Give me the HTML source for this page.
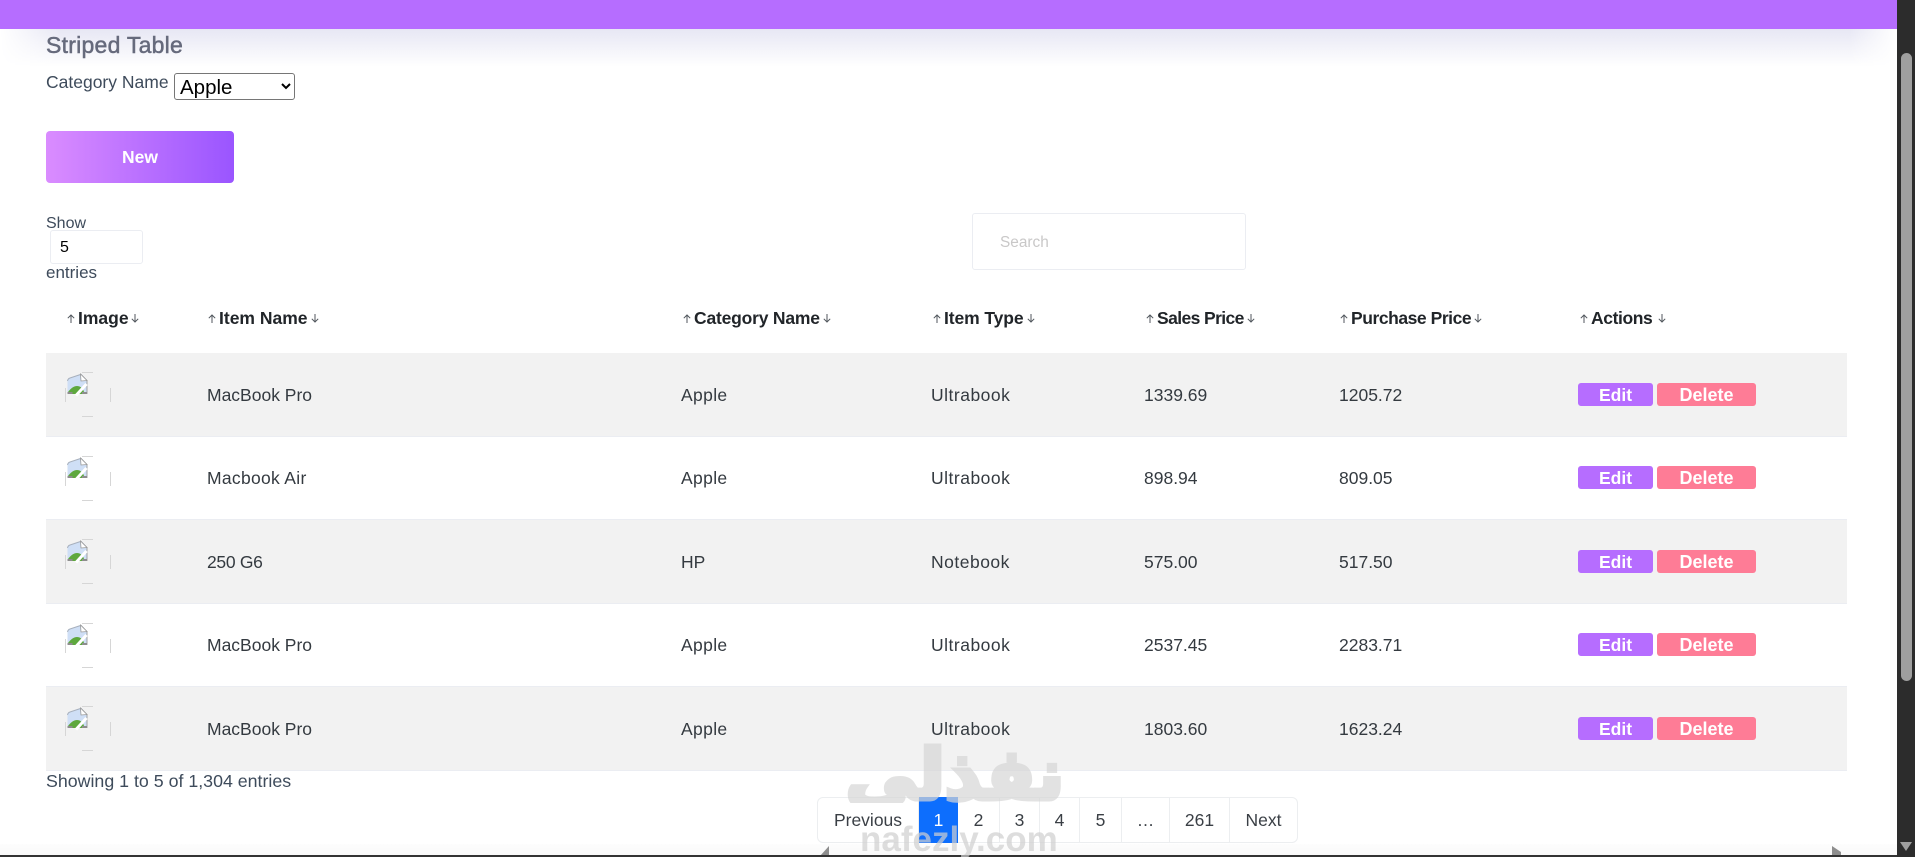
<!DOCTYPE html>
<html lang="en">
<head>
<meta charset="utf-8">
<title>Striped Table</title>
<style>
*{box-sizing:border-box}
html,body{margin:0;padding:0;width:1915px;height:857px;overflow:hidden;background:#fff}
body{position:relative;font-family:"Liberation Sans",sans-serif;font-size:17.5px;color:#343a40}
.abs{position:absolute}
#nav{left:0;top:0;width:1897px;height:29px;background:#b66dff;z-index:3}
#shade{left:0;top:29px;width:1897px;height:38px;background:linear-gradient(#e7e7f4,#fff);-webkit-mask-image:linear-gradient(90deg,transparent 0,#000 60px,#000 1850px,transparent 1897px)}
#title{left:46px;top:31px;margin:0;font-size:23px;line-height:28px;font-weight:400;letter-spacing:.25px;color:#666a7c;-webkit-text-stroke:.5px #666a7c}
#catl{left:46px;top:72px;line-height:20px;font-size:17.5px;color:#3e4b5b}
#cat{left:174px;top:73px;width:121px;height:27px;font:20.5px "Liberation Sans",sans-serif;color:#000;background:#fff;border:1px solid #767676;border-radius:3px;padding:1px 0 0 1px}
#new{left:46px;top:131px;width:188px;height:52px;border:0;border-radius:4px;background:linear-gradient(90deg,#da8cff,#9a55ff);color:#fff;font:bold 17.5px "Liberation Sans",sans-serif;padding:0}
#show{left:46px;top:214px;line-height:20px;font-size:16px;color:#3e4b5b}
#num{left:50px;top:230px;width:93px;height:34px;border:1px solid #ebedf2;border-radius:3px;font:16px "Liberation Sans",sans-serif;color:#000;padding:1px 0 0 9px;background:#fff}
#ent{left:46px;top:263px;line-height:20px;font-size:17px;color:#3e4b5b}
#search{left:972px;top:213px;width:274px;height:57px;border:1px solid #ebedf2;border-radius:3px;font:15.4px "Liberation Sans",sans-serif;padding:2px 0 0 27px;background:#fff}
#search::placeholder{color:#c9c8c8;opacity:1}
table{position:absolute;left:46px;top:285px;width:1801px;border-collapse:separate;border-spacing:0;table-layout:fixed}
th{height:68px;padding:0;text-align:left;font-size:17.5px;font-weight:700;color:#212529;vertical-align:middle}
th div{display:flex;align-items:center;gap:3px;position:relative;top:-1px;white-space:nowrap}
th svg{width:8px;height:9px;flex:none}
td{padding:1px 0 0;vertical-align:middle;color:#343a40;border-bottom:1px solid #ebedf2;position:relative}
td.n{padding-left:1px}
tbody tr:nth-child(odd){background:#f2f2f2}
tr.a{height:84px}tr.b{height:83px}
.ph{position:absolute;left:19px;top:19px;width:46px;height:46px}
.u{letter-spacing:.5px}.p{letter-spacing:.35px}
.btn{display:inline-block;position:relative;top:-1px;height:23px;line-height:24px;border-radius:3px;color:#fff;font-weight:700;text-align:center;vertical-align:middle;border:0;padding:0;font-family:"Liberation Sans",sans-serif}
.e{width:75px;background:#b66dff;font-size:17.5px;margin-right:4px}
.d{width:99px;background:#fe7c96;font-size:18px}
#info{left:46px;top:771px;line-height:20px;font-size:17.8px;color:#3e4b5b}
#pg{left:817px;top:797px;height:46px;display:flex;border:1px solid #eceef0;border-radius:6px;background:#fff;font-size:17.5px;color:#3a3f45}
#pg a{display:flex;align-items:center;justify-content:center;border-right:1px solid #eceef0;height:100%}
#pg a:last-child{border-right:0}
#pg a.on{background:#0d6efd;color:#fff;border:0;margin:-1px 0;height:46px}
#band{left:0;top:844px;width:1897px;height:13px;background:linear-gradient(#fdfdfd,#f8f8f8)}
#line{left:0;top:855px;width:1897px;height:2px;background:#333}
#sb{left:1897px;top:0;width:18px;height:857px;background:#2c2c2c;z-index:4}
#th{left:4px;top:53px;width:11px;height:628px;background:#9f9f9f;border-radius:6px}
#ar{left:3px;top:842px}
.harrow{z-index:2}
#wmc{left:830px;top:700px;width:250px;height:103px;overflow:hidden;z-index:5;opacity:.7}
#wm1{position:absolute;left:0;top:25px;width:100%;text-align:center;font-family:"DejaVu Sans",sans-serif;font-weight:700;font-size:70px;line-height:100px;color:#d6d6d6;-webkit-text-stroke:5px #d6d6d6;white-space:nowrap;transform:scaleX(1.02)}
#wm2{left:860px;top:818px;font-family:"Liberation Sans",sans-serif;font-weight:700;font-size:35px;line-height:44px;color:#d0d0d0;opacity:.7;z-index:5;white-space:nowrap}
</style>
</head>
<body>
<div class="abs" id="shade"></div>
<div class="abs" id="nav"></div>

<h4 class="abs" id="title">Striped Table</h4>
<label class="abs" id="catl">Category Name</label>
<select class="abs" id="cat"><option>Apple</option></select>
<button class="abs" id="new">New</button>
<div class="abs" id="show">Show</div>
<input class="abs" id="num" value="5">
<div class="abs" id="ent">entries</div>
<input class="abs" id="search" placeholder="Search">

<svg width="0" height="0" style="position:absolute">
  <symbol id="up" viewBox="0 0 8 9"><path d="M4 9V1M.8 4.2 4 1l3.2 3.200" fill="none" stroke="#50565c" stroke-width="1"/></symbol>
  <symbol id="dn" viewBox="0 0 8 9"><path d="M4 0v8M.8 4.800 4 8l3.200-3.200" fill="none" stroke="#50565c" stroke-width="1"/></symbol>
  <symbol id="bk" viewBox="0 0 46 46">
    <path d="M17 .5h11M17 44.500h11M.5 16v14M45.500 16v14" stroke="#d6d6d6" fill="none"/>
    <path d="M2.500 8.500Q3 6.500 5 6L13.500 3 16.500 2 22 8V22H2.500Z" fill="#cfdff6"/>
    <path d="M2.500 9Q3 6.500 5 6L15.500 2.500" fill="none" stroke="#a7b0bd" stroke-width="1"/>
    <path d="M15.500 2 22 8.500V22" fill="none" stroke="#9a9a9a" stroke-width=".9"/>
    <path d="M15.500 2 22 8.500 16 9Z" fill="#fff" stroke="#9a9a9a" stroke-width=".8"/>
    <path d="M3 20C6 16 9 14 12 14 15 14 18 16 19 20V22H3Z" fill="#5ea83e"/>
    <path d="M2.500 20h5v2h-5zM17 20h5v2h-5z" fill="#8d8d8d"/>
    <path d="M11 23.500 21.500 12" stroke="#fff" stroke-width="3" fill="none"/>
  </symbol>
</svg>

<table>
<colgroup><col style="width:161px"><col style="width:474px"><col style="width:249px"><col style="width:214px"><col style="width:194px"><col style="width:240px"><col style="width:269px"></colgroup>
<thead><tr>
<th style="padding-left:21px"><div><svg><use href="#up"/></svg>Image<svg style="margin-left:-1px"><use href="#dn"/></svg></div></th>
<th style="padding-left:1px"><div><svg><use href="#up"/></svg>Item Name<svg><use href="#dn"/></svg></div></th>
<th style="padding-left:2px"><div style="letter-spacing:-.2px"><svg><use href="#up"/></svg>Category Name<svg><use href="#dn"/></svg></div></th>
<th style="padding-left:3px"><div style="letter-spacing:-.1px"><svg><use href="#up"/></svg>Item Type<svg><use href="#dn"/></svg></div></th>
<th style="padding-left:2px"><div style="letter-spacing:-.6px"><svg><use href="#up"/></svg>Sales Price<svg><use href="#dn"/></svg></div></th>
<th style="padding-left:2px"><div style="letter-spacing:-.45px"><svg><use href="#up"/></svg>Purchase Price<svg><use href="#dn"/></svg></div></th>
<th style="padding-left:2px"><div style="letter-spacing:-.4px"><svg><use href="#up"/></svg>Actions<svg style="margin-left:3px"><use href="#dn"/></svg></div></th>
</tr></thead>
<tbody>
<tr class="a"><td><svg class="ph"><use href="#bk"/></svg></td><td>MacBook Pro</td><td class="p">Apple</td><td class="n u">Ultrabook</td><td>1339.69</td><td class="n">1205.72</td><td><button class="btn e">Edit</button><button class="btn d">Delete</button></td></tr>
<tr class="b"><td><svg class="ph"><use href="#bk"/></svg></td><td style="letter-spacing:.3px">Macbook Air</td><td class="p">Apple</td><td class="n u">Ultrabook</td><td>898.94</td><td class="n">809.05</td><td><button class="btn e">Edit</button><button class="btn d">Delete</button></td></tr>
<tr class="a"><td><svg class="ph"><use href="#bk"/></svg></td><td style="letter-spacing:-.3px">250 G6</td><td>HP</td><td class="n u">Notebook</td><td>575.00</td><td class="n">517.50</td><td><button class="btn e">Edit</button><button class="btn d">Delete</button></td></tr>
<tr class="b"><td><svg class="ph"><use href="#bk"/></svg></td><td>MacBook Pro</td><td class="p">Apple</td><td class="n u">Ultrabook</td><td>2537.45</td><td class="n">2283.71</td><td><button class="btn e">Edit</button><button class="btn d">Delete</button></td></tr>
<tr class="a"><td><svg class="ph"><use href="#bk"/></svg></td><td>MacBook Pro</td><td class="p">Apple</td><td class="n u">Ultrabook</td><td>1803.60</td><td class="n">1623.24</td><td><button class="btn e">Edit</button><button class="btn d">Delete</button></td></tr>
</tbody>
</table>

<div class="abs" id="info">Showing 1 to 5 of 1,304 entries</div>

<div class="abs" id="band"></div>
<div class="abs" id="pg">
<a style="width:101px">Previous</a><a class="on" style="width:39px">1</a><a style="width:42px">2</a><a style="width:40px">3</a><a style="width:40px">4</a><a style="width:42px">5</a><a style="width:48px">…</a><a style="width:60px">261</a><a style="width:67px">Next</a>
</div>
<svg class="abs harrow" style="left:820px;top:846px" width="10" height="10"><path d="M9 0v10H0z" fill="#8e8e8e"/></svg>
<svg class="abs harrow" style="left:1832px;top:846px" width="10" height="10"><path d="M0 0l9 6v4H0z" fill="#8e8e8e"/></svg>
<div class="abs" id="line" style="z-index:2"></div>

<div class="abs" id="wmc"><div id="wm1" dir="rtl">نفذلي</div></div>
<div class="abs" id="wm2">nafezly.com</div>

<div class="abs" id="sb">
  <div class="abs" id="th"></div>
  <svg class="abs" id="ar" width="12" height="10"><path d="M0 0h12L6 9z" fill="#9f9f9f"/></svg>
</div>
</body>
</html>
